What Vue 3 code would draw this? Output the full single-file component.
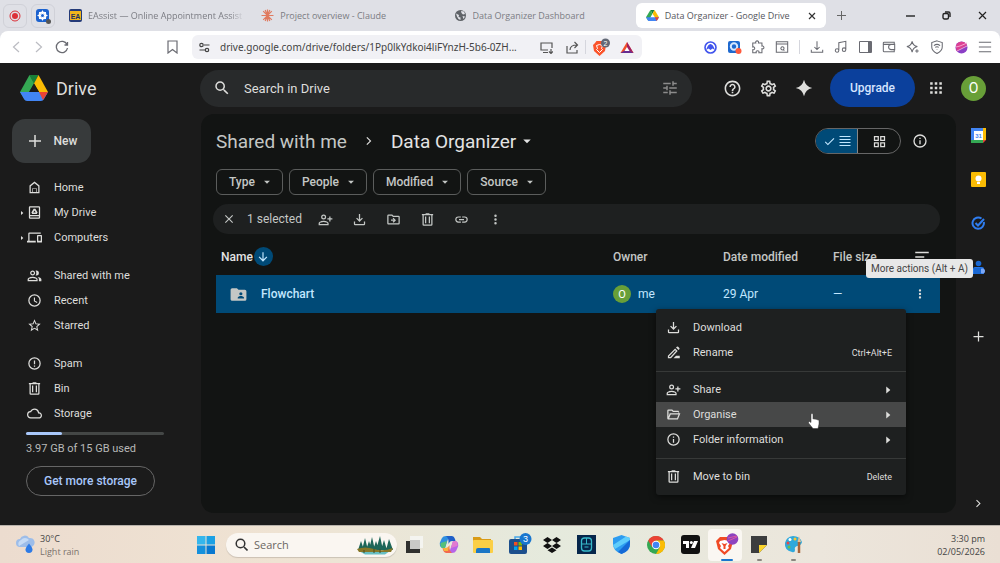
<script setup>
import { h, ref } from 'vue'

const paths = {
  search: 'M15.5 14h-.79l-.28-.27A6.47 6.47 0 0 0 16 9.5 6.5 6.5 0 1 0 9.5 16c1.61 0 3.09-.59 4.23-1.57l.27.28v.79l5 4.99L20.49 19l-4.99-5zm-6 0C7.01 14 5 11.99 5 9.5S7.01 5 9.5 5 14 7.01 14 9.5 11.99 14 9.5 14z',
  tune: 'M3 17v2h6v-2H3zM3 5v2h10V5H3zm10 16v-2h8v-2h-8v-2h-2v6h2zM7 9v2H3v2h4v2h2V9H7zm14 4v-2H11v2h10zm-6-4h2V7h4V5h-4V3h-2v6z',
  help: 'M11 18h2v-2h-2v2zm1-16C6.48 2 2 6.48 2 12s4.48 10 10 10 10-4.48 10-10S17.52 2 12 2zm0 18c-4.41 0-8-3.59-8-8s3.59-8 8-8 8 3.59 8 8-3.59 8-8 8zm0-14c-2.21 0-4 1.79-4 4h2c0-1.1.9-2 2-2s2 .9 2 2c0 2-3 1.75-3 5h2c0-2.25 3-2.5 3-5 0-2.21-1.79-4-4-4z',
  settings: 'M19.43 12.98c.04-.32.07-.64.07-.98 0-.34-.03-.66-.07-.98l2.11-1.65c.19-.15.24-.42.12-.64l-2-3.46a.5.5 0 0 0-.61-.22l-2.49 1c-.52-.4-1.08-.73-1.69-.98l-.38-2.65A.488.488 0 0 0 14 2h-4c-.25 0-.46.18-.49.42l-.38 2.65c-.61.25-1.17.59-1.69.98l-2.49-1a.566.566 0 0 0-.18-.03c-.17 0-.34.09-.43.25l-2 3.46c-.13.22-.07.49.12.64l2.11 1.65c-.04.32-.07.65-.07.98 0 .33.03.66.07.98l-2.11 1.65c-.19.15-.24.42-.12.64l2 3.46a.5.5 0 0 0 .61.22l2.49-1c.52.4 1.08.73 1.69.98l.38 2.65c.03.24.24.42.49.42h4c.25 0 .46-.18.49-.42l.38-2.65c.61-.25 1.17-.59 1.69-.98l2.49 1c.06.02.12.03.18.03.17 0 .34-.09.43-.25l2-3.46c.12-.22.07-.49-.12-.64l-2.11-1.65zm-1.98-1.71c.04.31.05.52.05.73 0 .21-.02.43-.05.73l-.14 1.13.89.7 1.08.84-.7 1.21-1.27-.51-1.04-.42-.9.68c-.43.32-.84.56-1.25.73l-1.06.43-.16 1.13-.2 1.35h-1.4l-.19-1.35-.16-1.13-1.06-.43c-.43-.18-.83-.41-1.23-.71l-.91-.7-1.06.43-1.27.51-.7-1.21 1.08-.84.89-.7-.14-1.13c-.03-.31-.05-.54-.05-.74s.02-.43.05-.73l.14-1.13-.89-.7-1.08-.84.7-1.21 1.27.51 1.04.42.9-.68c.43-.32.84-.56 1.25-.73l1.06-.43.16-1.13.2-1.35h1.39l.19 1.35.16 1.13 1.06.43c.43.18.83.41 1.23.71l.91.7 1.06-.43 1.27-.51.7 1.21-1.07.85-.89.7.14 1.13zM12 8c-2.21 0-4 1.79-4 4s1.79 4 4 4 4-1.79 4-4-1.79-4-4-4zm0 6c-1.1 0-2-.9-2-2s.9-2 2-2 2 .9 2 2-.9 2-2 2z',
  spark: 'M12 1Q14 10 23 12 14 14 12 23 10 14 1 12 10 10 12 1z',
  apps: 'M5 8h3V5H5v3zm5.500 11h3v-3h-3v3zM5 19h3v-3H5v3zm0-5.500h3v-3H5v3zm5.500 0h3v-3h-3v3zM16 5v3h3V5h-3zm-5.500 3h3V5h-3v3zm5.500 5.500h3v-3h-3v3zm0 5.500h3v-3h-3v3z',
  plus: 'M20 13h-7v7h-2v-7H4v-2h7V4h2v7h7z',
  home: 'M12 2.500 4 8.800V21h16V8.800zM18 19h-2.500v-6h-7v6H6V9.800l6-4.700 6 4.700zM9.500 14h5v5h-5z',
  drive: 'M5 2h14a2 2 0 0 1 2 2v16a2 2 0 0 1-2 2H5a2 2 0 0 1-2-2V4c0-1.100.9-2 2-2zm0 2v12h14V4zm0 14v2h14v-2zM10.600 6h2.800l3.600 6-1.400 2.500H8.400L7 12zM12 8.700 10 12h4z',
  computers: 'M4 6h18V4H4c-1.100 0-2 .9-2 2v11H0v3h14v-3H4V6zm19 2h-6c-.55 0-1 .45-1 1v10c0 .55.45 1 1 1h6c.55 0 1-.45 1-1V9c0-.55-.45-1-1-1zm-1 9h-4v-7h4v7z',
  people: 'M9 12c2.210 0 4-1.790 4-4s-1.790-4-4-4-4 1.790-4 4 1.790 4 4 4zm0-6a2 2 0 1 1 0 4 2 2 0 0 1 0-4zm0 8c-2.670 0-8 1.340-8 4v3h16v-3c0-2.660-5.330-4-8-4zm6 5H3v-1c0-.7 3-2 6-2s6 1.300 6 2zM15 12a4 4 0 1 0 0-8c-.5 0-.9.100-1.300.2 1.700 2 1.700 5.600 0 7.600.4.100.8.200 1.300.2zm2 2.400c1.500 1 2 2.200 2 3.600v3h4v-3c0-2-3-3.200-6-3.600z',
  clock: 'M12 2a10 10 0 1 0 0 20 10 10 0 0 0 0-20zm0 18a8 8 0 1 1 0-16 8 8 0 0 1 0 16zm.8-13H11v6l4.800 3 .9-1.500-3.900-2.300z',
  star: 'M22 9.240l-7.190-.62L12 2 9.190 8.630 2 9.240l5.460 4.730L5.820 21 12 17.270 18.180 21l-1.630-7.030L22 9.240zM12 15.400l-3.760 2.270 1-4.280-3.320-2.880 4.380-.38L12 6.100l1.710 4.040 4.380.38-3.320 2.880 1 4.280L12 15.400z',
  spam: 'M11 15h2v2h-2zm0-8h2v6h-2zm1-5a10 10 0 1 0 0 20 10 10 0 0 0 0-20zm0 18a8 8 0 1 1 0-16 8 8 0 0 1 0 16z',
  bin: 'M15 3V2H9v1H3v2h1v15a2 2 0 0 0 2 2h12a2 2 0 0 0 2-2V5h1V3zM6 20V5h12v15zM8 7h2v11H8zm6 0h2v11h-2z',
  cloud: 'M19.350 10.040A7.490 7.490 0 0 0 12 4C9.110 4 6.600 5.640 5.350 8.040A5.994 5.994 0 0 0 0 14c0 3.310 2.690 6 6 6h13c2.760 0 5-2.240 5-5 0-2.640-2.050-4.780-4.650-4.960zM19 18H6c-2.210 0-4-1.790-4-4 0-2.050 1.530-3.760 3.560-3.970l1.070-.11.5-.95A5.469 5.469 0 0 1 12 6c2.620 0 4.880 1.860 5.390 4.430l.3 1.500 1.530.11A2.980 2.980 0 0 1 22 15c0 1.650-1.350 3-3 3z',
  personAdd: 'M9 12a4 4 0 1 0 0-8 4 4 0 0 0 0 8zm0-6a2 2 0 1 1 0 4 2 2 0 0 1 0-4zm0 8c-2.670 0-8 1.340-8 4v3h16v-3c0-2.660-5.330-4-8-4zm6 5H3v-1c0-.7 3-2 6-2s6 1.300 6 2zm5-9V7h-2v3h-3v2h3v3h2v-3h3v-2z',
  download: 'M11 3h2v9l3-3 1.400 1.400L12 16l-5.400-5.600L8 9l3 3zM3 15h2v4h14v-4h2v4a2 2 0 0 1-2 2H5a2 2 0 0 1-2-2z',
  move: 'M20 6h-8l-2-2H4a2 2 0 0 0-2 2v12c0 1.100.9 2 2 2h16a2 2 0 0 0 2-2V8a2 2 0 0 0-2-2zm0 12H4V6h5.200l2 2H20zm-8-1 4-4-4-4-1.400 1.400 1.600 1.600H8v2h4.200l-1.600 1.600z',
  link: 'M3.900 12c0-1.710 1.390-3.100 3.100-3.100h4V7H7a5 5 0 0 0 0 10h4v-1.900H7c-1.710 0-3.100-1.390-3.100-3.100zM8 13h8v-2H8v2zm9-6h-4v1.900h4a3.100 3.100 0 0 1 0 6.200h-4V17h4a5 5 0 0 0 0-10z',
  dots: 'M12 8a2 2 0 1 0 0-4 2 2 0 0 0 0 4zm0 2a2 2 0 1 0 0 4 2 2 0 0 0 0-4zm0 6a2 2 0 1 0 0 4 2 2 0 0 0 0-4z',
  close: 'M19 6.400 17.600 5 12 10.600 6.400 5 5 6.400 10.600 12 5 17.600 6.400 19 12 13.400 17.600 19 19 17.600 13.400 12z',
  info: 'M11 7h2v2h-2zm0 4h2v6h-2zm1-9a10 10 0 1 0 0 20 10 10 0 0 0 0-20zm0 18a8 8 0 1 1 0-16 8 8 0 0 1 0 16z',
  caret: 'm7 10 5 5 5-5z',
  side: 'm9 6 7 6-7 6z',
  chevron: 'm9 5-1.400 1.400L13.200 12l-5.600 5.600L9 19l7-7z',
  check: 'M9 16.200 4.800 12l-1.400 1.400L9 19 21 7l-1.400-1.400z',
  list: 'M1 2h22v2.200H1zm0 6h22v2.200H1zm0 6h22v2.200H1zm0 6h22v2.200H1z',
  grid: 'M3 3h8v8H3zm2 2v4h4V5zm8-2h8v8h-8zm2 2v4h4V5zM3 13h8v8H3zm2 2v4h4v-4zm8-2h8v8h-8zm2 2v4h4v-4z',
  down: 'M11 4h2v12l5-5 1.400 1.400L12 20l-7.400-7.600L6 11l5 5z',
  rename: 'M3 21h5L18.600 9.400l-4-4L3 17zm2-3.200L14.600 8.200l1.200 1.200L6.900 19H5zM16 4l4 4 1.300-1.300a1.500 1.500 0 0 0 0-2L19.400 2.700a1.500 1.500 0 0 0-2 0zM12 21l4-4h6v4z',
  folderOpen: 'M20 6h-8l-2-2H4a2 2 0 0 0-2 2v12c0 1.100.9 2 2 2h15l4-10h-2V8zM4 6h5.200l2 2H20v2H6L4 15zm13.700 12H5l2.500-6h12.600z',
  sharedFolder: 'M20 6h-8l-2-2H4a2 2 0 0 0-2 2v12c0 1.100.9 2 2 2h16a2 2 0 0 0 2-2V8a2 2 0 0 0-2-2zm-5 3a2 2 0 1 1 0 4 2 2 0 0 1 0-4zm4 8h-8v-1c0-1.300 2.700-2 4-2s4 .7 4 2z',
  filter: 'M3 5h18v2H3zm0 6h12v2H3zm0 6h6v2H3z'
}

const Icon = (props) =>
  h('svg', { viewBox: '0 0 24 24', width: props.size || 16, height: props.size || 16, fill: 'currentColor', 'fill-rule': 'evenodd', 'aria-hidden': 'true' }, [
    h('path', { d: paths[props.name] })
  ])
Icon.props = ['name', 'size']

/* Outline icons of the browser toolbar, 16-unit grid */
const linePaths = {
  puzzle: 'M2 3.500h3.500c-1-3.300 4-3.300 3 0H12.500V7c3-1 3 4 0 3v4.500H9c1-3-4-3-3 0H2V11c3 1 3-4 0-3z',
  find: 'M1.500 2h13v12h-13zM1.500 4.500h13M9.500 11a1.800 1.800 0 1 0-2.500-2.500A1.800 1.800 0 0 0 9.500 11l1.200 1.200',
  save: 'M8 1.500v9M5 8l3 3 3-3M1.500 11v3h13v-3',
  music: 'M5.500 12V3l8-1.500V11M5.500 12a2 2 0 1 1-4 0 2 2 0 0 1 4 0zM13.500 11a2 2 0 1 1-4 0 2 2 0 0 1 4 0z',
  wallet: 'M14 5V2.500H2.500a1 1 0 0 0-1 1v9a1 1 0 0 0 1 1H14V11M1.500 5h13v6h-4a3 3 0 0 1 0-6',
  stars: 'M7 1.500Q8 6.500 13 7.500 8 8.500 7 14 6 8.500 1 7.500 6 6.500 7 1.500zM12.500 10.500v4M10.500 12.500h4',
  vpn: 'M8 1l6 2v5c0 4-3 6-6 7.500C5 14 2 12 2 8V3zM4.500 6.500q3.500-3 7 0M6 8.500q2-1.500 4 0M8 10.500v.5',
  menu: 'M1 2.500h14M1 8h14M1 13.500h14'
}
const LineIcon = (props) =>
  h('svg', { viewBox: '0 0 16 16', width: 14, height: 14, fill: 'none', stroke: 'currentColor', 'stroke-width': 1.2, 'aria-hidden': 'true' }, [
    h('path', { d: linePaths[props.name] })
  ])
LineIcon.props = ['name']

const address = ref('drive.google.com/drive/folders/1Pp0lkYdkoi4liFYnzH-5b6-0ZH...')
const driveQuery = ref('')
const taskQuery = ref('')
const used = 26

const tabs = [
  { title: 'EAssist — Online Appointment Assist', icon: 'ea' },
  { title: 'Project overview - Claude', icon: 'claude' },
  { title: 'Data Organizer Dashboard', icon: 'globe' },
  { title: 'Data Organizer - Google Drive', icon: 'drive', active: true }
]
const nav = [
  [
    { label: 'Home', icon: 'home' },
    { label: 'My Drive', icon: 'drive', more: true },
    { label: 'Computers', icon: 'computers', more: true }
  ],
  [
    { label: 'Shared with me', icon: 'people' },
    { label: 'Recent', icon: 'clock' },
    { label: 'Starred', icon: 'star' }
  ],
  [
    { label: 'Spam', icon: 'spam' },
    { label: 'Bin', icon: 'bin' },
    { label: 'Storage', icon: 'cloud' }
  ]
]
const chips = ['Type', 'People', 'Modified', 'Source']
const actions = [
  ['personAdd', 'Share'],
  ['download', 'Download'],
  ['move', 'Move'],
  ['bin', 'Move to bin'],
  ['link', 'Copy link'],
  ['dots', 'More']
]
const menu = [
  [
    { label: 'Download', icon: 'download' },
    { label: 'Rename', icon: 'rename', key: 'Ctrl+Alt+E' }
  ],
  [
    { label: 'Share', icon: 'personAdd', more: true },
    { label: 'Organise', icon: 'folderOpen', more: true, hover: true },
    { label: 'Folder information', icon: 'info', more: true }
  ],
  [{ label: 'Move to bin', icon: 'bin', key: 'Delete' }]
]
</script>

<template>
  <div class="screen">
    <header class="tabbar">
      <button class="pin" aria-label="Recorder">
        <svg width="12" height="12" viewBox="0 0 12 12"><circle cx="6" cy="6" r="5" fill="none" stroke="#dc3038" /><circle cx="6" cy="6" r="3" fill="#dc3038" /></svg>
      </button>
      <button class="pin" aria-label="Pinned settings">
        <svg width="16" height="16" viewBox="0 0 16 16"><rect x="1" y="1" width="13" height="13" rx="3" fill="#1c62cf" /><circle cx="7.500" cy="7.500" r="3" fill="none" stroke="#fff" stroke-width="2" /><path d="M7.500 2.500v10M2.500 7.500h10M4 4l7 7M11 4l-7 7" stroke="#fff" /><circle cx="7.500" cy="7.500" r="1.500" fill="#1c62cf" /><circle cx="13.500" cy="13.500" r="2.500" fill="#555" /></svg>
      </button>
      <div class="tabs">
        <button v-for="t in tabs" :key="t.title" class="tab" :class="{ active: t.active }">
          <svg v-if="t.icon === 'ea'" width="13" height="13" viewBox="0 0 13 13"><rect width="13" height="13" rx="2" fill="#243a78" /><rect x="1" y="2" width="11" height="9" fill="#f0b51c" /><text x="6.500" y="9.500" text-anchor="middle" class="ea">EA</text></svg>
          <svg v-else-if="t.icon === 'claude'" width="13" height="13" viewBox="0 0 13 13"><path d="M6.500.5v12M.5 6.500h12M2.200 2.200l8.600 8.600M10.800 2.200l-8.600 8.600M4.200 1l4.600 11M8.800 1 4.200 12" stroke="#e07a5f" stroke-width="1.200" /></svg>
          <svg v-else-if="t.icon === 'globe'" width="13" height="13" viewBox="0 0 13 13"><circle cx="6.500" cy="6.500" r="5.500" fill="#5f6368" /><path d="M2 4.500 5 6 4.500 8l2 .5v2.500L4.500 10 3 7.500zM7 2l3 .5 1 2.500-2 .5L7.500 4zM8.500 7l2.500.5-1.500 2.500z" fill="#e2e3e9" /></svg>
          <svg v-else width="13" height="13" viewBox="0 0 28 26"><path d="M9.500 1h9L14 9z" fill="#188038" /><path d="M9.500 1 14 9 5 25 0 17z" fill="#34a853" /><path d="M18.500 1 28 17h-9L14 9z" fill="#fbbc04" /><path d="M0 17h28l-5 8H5z" fill="#4285f4" /><path d="M19 17h9l-5 8z" fill="#ea4335" /></svg>
          <span class="tab-title">{{ t.title }}</span>
          <svg v-if="t.active" class="tab-x" width="8" height="8" viewBox="0 0 8 8"><path d="M1 1l6 6M7 1 1 7" stroke="#333" stroke-width="1.200" /></svg>
        </button>
      </div>
      <button class="new-tab" aria-label="New tab"><svg width="9" height="9" viewBox="0 0 9 9"><path d="M4.500 0v9M0 4.500h9" stroke="#666" /></svg></button>
      <div class="window-buttons">
        <button aria-label="Minimise"><svg width="9" height="9" viewBox="0 0 9 9"><path d="M0 5h9" stroke="#222" stroke-width="1.400" /></svg></button>
        <button aria-label="Restore"><svg width="9" height="9" viewBox="0 0 9 9"><rect x="1" y="2.500" width="5.500" height="5.500" rx="1.500" fill="none" stroke="#222" stroke-width="1.400" /><path d="M3 1h3.500Q8 1 8 2.500V6" fill="none" stroke="#222" stroke-width="1.400" /></svg></button>
        <button aria-label="Close window"><svg width="9" height="9" viewBox="0 0 9 9"><path d="M1 1l7 7M8 1 1 8" stroke="#222" stroke-width="1.200" /></svg></button>
      </div>
    </header>

    <div class="toolbar">
      <button class="faint" aria-label="Back"><svg width="8" height="12" viewBox="0 0 8 12"><path d="M7 1 1.500 6 7 11" fill="none" stroke="currentColor" stroke-width="1.200" /></svg></button>
      <button class="faint" aria-label="Forward"><svg width="8" height="12" viewBox="0 0 8 12"><path d="m1 1 5.500 5L1 11" fill="none" stroke="currentColor" stroke-width="1.200" /></svg></button>
      <button aria-label="Reload"><svg width="14" height="14" viewBox="0 0 14 14"><path d="M12 4.500A5.600 5.600 0 1 0 12.500 8M12.500 2v3H9.500" fill="none" stroke="currentColor" stroke-width="1.300" /></svg></button>
      <button class="bookmark" aria-label="Bookmark"><svg width="11" height="14" viewBox="0 0 11 14"><path d="M1 1h9v12L5.500 9.500 1 13z" fill="none" stroke="currentColor" stroke-width="1.200" /></svg></button>
      <div class="address">
        <button aria-label="Site settings"><svg width="11" height="11" viewBox="0 0 11 11" fill="none" stroke="#444" stroke-width="1.200"><circle cx="2.500" cy="3" r="1.700" /><path d="M5 3h5.500M.5 8h5.500" /><circle cx="8" cy="8" r="1.700" /></svg></button>
        <input v-model="address" aria-label="Address">
        <button aria-label="Install app"><svg width="13" height="13" viewBox="0 0 13 13" fill="none" stroke="#555" stroke-width="1.200"><path d="M12 7V2H1v7h7M3 11.500h5M11 8v4.500M9 10.500l2 2 2-2" /></svg></button>
        <button aria-label="Share page"><svg width="13" height="13" viewBox="0 0 13 13" fill="none" stroke="#555" stroke-width="1.200"><path d="M1 5v7h10V9M4 9q0-5 7-5M8.500 1l3 3-3 3" /></svg></button>
        <i class="bar"></i>
        <button class="shields" aria-label="Shields">
          <svg width="19" height="19" viewBox="0 0 19 19"><path d="m4 5 1.500-2h6L13 5l2 2-1 6-5.500 5L3 13 2 7z" fill="#fb542b" /><path d="m5.500 7.500 3-1 3 1-1 3 1 1-3 3-3-3 1-1z" fill="none" stroke="#fff" /><circle cx="14.500" cy="5" r="4.500" fill="#626875" /><text x="14.500" y="7.500" class="count">2</text></svg>
        </button>
        <button aria-label="Rewards"><svg width="14" height="13" viewBox="0 0 14 13"><path d="M7 1 .5 12h13z" fill="#f0502a" /><path d="M7 1v7l6.500 4z" fill="#9e1f63" /><path d="M.5 12h13L7 8z" fill="#662d91" /><path d="m7 6-2.500 4h5z" fill="#fff" /></svg></button>
      </div>
      <div class="extensions">
        <button aria-label="VPN extension"><svg width="13" height="13" viewBox="0 0 13 13"><circle cx="6.500" cy="6.500" r="5.500" fill="#fff" stroke="#4054ed" stroke-width="1.600" /><path d="M2 9q2-6 4.500-6T11 9L8.500 7.500 6.500 9l-2-1.500z" fill="#4054ed" /></svg></button>
        <button aria-label="Recorder extension"><svg width="15" height="15" viewBox="0 0 15 15"><rect x="1" y="1" width="12" height="12" rx="2" fill="#1e69cf" /><circle cx="7" cy="6.500" r="3.200" fill="none" stroke="#d6e8ff" stroke-width="2" /><circle cx="11.500" cy="11" r="3" fill="#ff5a3c" /></svg></button>
        <button aria-label="Extensions"><LineIcon name="puzzle" /></button>
        <button aria-label="Find"><LineIcon name="find" /></button>
      </div>
      <i class="bar"></i>
      <div class="extensions">
        <button aria-label="Downloads"><LineIcon name="save" /></button>
        <button aria-label="Playlist"><LineIcon name="music" /></button>
        <button aria-label="Sidebar"><svg width="13" height="12" viewBox="0 0 13 12"><path d="M.5.5h12v11H.5z" fill="none" stroke="currentColor" /><path d="M9 1h3v10H9z" fill="currentColor" /></svg></button>
        <button aria-label="Wallet"><LineIcon name="wallet" /></button>
        <button aria-label="Assistant"><LineIcon name="stars" /></button>
        <button aria-label="VPN"><LineIcon name="vpn" /></button>
        <button aria-label="Profile"><svg width="13" height="13" viewBox="0 0 13 13"><circle cx="6.500" cy="6.500" r="6" fill="#8b3fc6" /><path d="M1 4.500A6 6 0 0 1 12 4L1.500 10z" fill="#dd3f92" /><path d="m1 6 4-1 7-3M2 10l10-5" stroke="#f4a2cf" fill="none" /></svg></button>
        <button aria-label="Browser menu"><LineIcon name="menu" /></button>
      </div>
    </div>

    <div class="drive">
      <header class="drive-head">
        <a class="brand" href="#">
          <svg width="28" height="26" viewBox="0 0 28 26"><path d="M9.500 0h9L14 9z" fill="#188038" /><path d="M9.500 0 14 8.500 5 25 0 17z" fill="#34a853" /><path d="M18.500 0 28 17h-9L14 8.500z" fill="#fbbc04" /><path d="M0 17h28l-4 7q-1 2-3 2H7q-2 0-3-2z" fill="#4285f4" /><path d="M19 17h9l-5 8z" fill="#ea4335" /><path d="M14 8.500 19 17H9z" fill="#1b1b1b" /></svg>
          <span>Drive</span>
        </a>
        <label class="search">
          <Icon name="search" size="18" />
          <input v-model="driveQuery" placeholder="Search in Drive" aria-label="Search in Drive">
          <button class="plain dim" aria-label="Search options"><Icon name="tune" size="18" /></button>
        </label>
        <div class="head-actions">
          <button class="plain" aria-label="Support"><Icon name="help" size="19" /></button>
          <button class="plain" aria-label="Settings"><Icon name="settings" size="19" /></button>
          <button class="plain" aria-label="Gemini"><Icon name="spark" size="18" /></button>
          <button class="upgrade">Upgrade</button>
          <button class="plain apps" aria-label="Google apps"><Icon name="apps" size="20" /></button>
          <button class="avatar big" aria-label="Account">O</button>
        </div>
      </header>

      <div class="drive-body">
        <aside class="side">
          <button class="new"><Icon name="plus" size="18" />New</button>
          <nav>
            <ul v-for="(group, i) in nav" :key="i">
              <li v-for="n in group" :key="n.label">
                <a href="#">
                  <span class="more"><Icon v-if="n.more" name="side" size="8" /></span>
                  <Icon :name="n.icon" size="15" />
                  {{ n.label }}
                </a>
              </li>
            </ul>
          </nav>
          <div class="storage">
            <div class="track"><div class="fill" :style="{ width: used + '%' }"></div></div>
            <p>3.97 GB of 15 GB used</p>
            <button>Get more storage</button>
          </div>
        </aside>

        <main class="panel">
          <div class="title-row">
            <a href="#" class="crumb">Shared with me</a>
            <Icon class="crumb-sep" name="chevron" size="14" />
            <button class="crumb here">Data Organizer<Icon name="caret" size="18" /></button>
            <div class="views">
              <button class="on" aria-label="List layout"><Icon name="check" size="13" /><Icon name="list" size="12" /></button>
              <button aria-label="Grid layout"><Icon name="grid" size="15" /></button>
            </div>
            <button class="plain" aria-label="View details"><Icon name="info" size="16" /></button>
          </div>
          <div class="chips">
            <button v-for="c in chips" :key="c">{{ c }}<Icon name="caret" size="14" /></button>
          </div>
          <div class="selection">
            <button class="plain" aria-label="Clear selection"><Icon name="close" size="14" /></button>
            <span>1 selected</span>
            <button v-for="a in actions" :key="a[0]" class="plain act" :aria-label="a[1]"><Icon :name="a[0]" size="15" /></button>
          </div>
          <table>
            <colgroup><col><col class="c-mid"><col class="c-mid"><col class="c-size"><col class="c-end"></colgroup>
            <thead>
              <tr>
                <th><span class="name-head">Name <span class="sort"><Icon name="down" size="14" /></span></span></th>
                <th>Owner</th><th>Date modified</th><th>File size</th>
                <th><button class="plain" aria-label="Sort options"><Icon name="filter" size="18" /></button></th>
              </tr>
            </thead>
            <tbody>
              <tr>
                <td><span class="file"><Icon name="sharedFolder" size="19" />Flowchart</span></td>
                <td><span class="owner"><span class="avatar">O</span>me</span></td>
                <td>29 Apr</td><td>—</td>
                <td>
                  <div class="row-end">
                    <button class="plain" aria-label="More actions (Alt + A)"><Icon name="dots" size="14" /></button>
                    <div class="tip" role="tooltip">More actions (Alt + A)</div>
                    <div class="menu" role="menu">
                      <div v-for="(group, i) in menu" :key="i" class="menu-group">
                        <button v-for="m in group" :key="m.label" role="menuitem" :class="{ hover: m.hover }">
                          <Icon :name="m.icon" size="15" /><span class="label">{{ m.label }}</span>
                          <kbd v-if="m.key">{{ m.key }}</kbd>
                          <Icon v-if="m.more" name="side" size="14" />
                          <svg v-if="m.hover" class="pointer" width="12" height="16" viewBox="0 0 12 16"><path d="M3 1.500q0-1 1-1t1 1V6q1-.8 2 .3 1.200-.6 2 .5 1.500-.5 2 1V11L10 15.500H5L.5 10q-.5-1.500 1-1.500L3 9.500z" fill="#fff" stroke="#333" stroke-width=".5" /></svg>
                        </button>
                      </div>
                    </div>
                  </div>
                </td>
              </tr>
            </tbody>
          </table>
        </main>

        <aside class="rail">
          <button aria-label="Calendar"><svg width="15" height="15" viewBox="0 0 15 15"><path d="M0 0h12v3H3v9H0z" fill="#4285f4" /><path d="M12 0h3v12h-3z" fill="#fbbc04" /><path d="M0 12h12v3H0z" fill="#34a853" /><path d="M12 12h3l-3 3z" fill="#ea4335" /><path d="M3 3h9v9H3z" fill="#fff" /><text x="7.500" y="10" class="cal">31</text></svg></button>
          <button aria-label="Keep"><svg width="15" height="15" viewBox="0 0 15 15"><rect width="15" height="15" rx="1" fill="#fbbc04" /><circle cx="7.500" cy="6.500" r="3" fill="#fff" /><path d="M6 10h3v2H6z" fill="#fff" /></svg></button>
          <button aria-label="Tasks"><svg width="15" height="15" viewBox="0 0 15 15"><path d="M10.500 2.500A5.700 5.700 0 1 0 12.800 6" fill="none" stroke="#2f7df0" stroke-width="2" /><path d="m4.500 7 2.500 2.500L13 3" fill="none" stroke="#2f7df0" stroke-width="2" /></svg></button>
          <button aria-label="Contacts"><svg width="15" height="15" viewBox="0 0 15 15"><circle cx="7.500" cy="3.500" r="2.800" fill="#1967d2" /><path d="M2 9q0-2 2-2h7q2 0 2 2v5H2z" fill="#2474e8" /><circle cx="11.500" cy="11" r="2.500" fill="#7ba7f7" /><path d="M3 8h7v6H3z" fill="#1967d2" /></svg></button>
          <button class="add" aria-label="Get add-ons"><Icon name="plus" size="15" /></button>
          <button class="hide" aria-label="Hide side panel"><Icon name="chevron" size="13" /></button>
        </aside>
      </div>
    </div>

    <footer class="taskbar">
      <button class="weather">
        <svg width="20" height="19" viewBox="0 0 20 19"><path d="M5 12a4 4 0 0 1 0-8 5 5 0 0 1 9-1 4 4 0 0 1 2 9z" fill="#9dbde9" /><path d="M4 11a4 4 0 0 1 2-6 5 5 0 0 1 8 0z" fill="#c6dbf5" /><path d="M14 8.500q3.500 4 3.500 6a3.500 3.500 0 0 1-7 0q0-2 3.500-6z" fill="#2e7be6" /></svg>
        <span><b>30°C</b><br>Light rain</span>
      </button>
      <div class="launch">
        <button aria-label="Start"><svg width="18" height="18" viewBox="0 0 18 18"><path d="M0 0h8.500v8.500H0z" fill="#35b6ec" /><path d="M9.500 0H18v8.500H9.500z" fill="#1ba0e4" /><path d="M0 9.500h8.500V18H0z" fill="#1590dc" /><path d="M9.500 9.500H18V18H9.500z" fill="#0878d0" /></svg></button>
        <label class="task-search">
          <svg width="13" height="13" viewBox="0 0 13 13"><circle cx="5.500" cy="5.500" r="4.300" fill="none" stroke="#333" stroke-width="1.500" /><path d="m9 9 3.500 3.500" stroke="#333" stroke-width="1.600" /></svg>
          <input v-model="taskQuery" placeholder="Search" aria-label="Search Windows">
          <svg width="38" height="20" viewBox="0 0 38 20"><path d="M3 16h31l-5 3.500H9z" fill="#67bfc4" /><path d="m2 15 3-9 3 9zM6 15l3-12 3 12zM10 15l3-9 3 9zM13 15l3-13 3 13zM17 15l3-9 3 9zM20 15l4-14 3 14zM25 15l3-10 3 10zM30 15l3-11 4 11z" fill="#1d6658" /><path d="M1 14q8-3 17 0t19-1l-2 4H3z" fill="#877727" /><path d="M8 15v3M18 14v4M24 14v4" stroke="#454c20" /></svg>
        </label>
        <div class="apps-row">
          <button aria-label="Task view"><svg width="18" height="18" viewBox="0 0 18 18"><path d="M5 0h13v12H5z" fill="#f4f4f0" /><path d="M1 5h9v8h5v4H1z" fill="#30302e" /><path d="M5 4h10v9H5z" fill="#c9c9c6" /></svg></button>
          <button aria-label="Copilot"><svg width="20" height="19" viewBox="0 0 20 19"><path d="M1 11q-1-3 1-6l1-2q1-2 4-2h3L6 13H4q-2 0-3-2z" fill="#2f8fe0" /><path d="M1.500 8 8 6l-2 7H4q-3 0-2.500-5z" fill="#55c07a" /><path d="M7 1h6q2 0 3 3l.5 2H13q-2 0-3 2l-.5 1Q10 3 7 1z" fill="#1f5fc8" /><path d="M19 8q1 3-1 6l-1 2q-1 2-4 2h-3l4-12h2q2 0 3 2z" fill="#b765e8" /><path d="m18.500 11-6.500 2 2-7h2q3 0 2.500 5z" fill="#e27bd0" /><path d="M13 18H7q-2 0-3-3l-.5-2H7q2 0 3-2l.5-1q-.500 6 2.500 8z" fill="#f2694e" /><path d="M4 13h3q2 0 3-2l-1 5H5z" fill="#f8b43c" /></svg></button>
          <button aria-label="File Explorer"><svg width="20" height="18" viewBox="0 0 20 18"><path d="M0 1h7l2 2h9v5H0z" fill="#d99b16" /><rect y="4" width="20" height="13" rx="1" fill="#fbcf45" /><path d="M5 12h11q1 0 1 1v4H3v-3q0-2 2-2z" fill="#1b76c5" /></svg></button>
          <button class="notified" aria-label="Store"><svg width="24" height="24" viewBox="0 0 24 24"><path d="M7 7V4h7v3" fill="none" stroke="#4aa8e8" stroke-width="1.500" /><rect x="1" y="6" width="18" height="15" rx="2" fill="#1d4f8c" /><path d="M6 9h3.500v3.500H6z" fill="#f25022" /><path d="M10.500 9H14v3.500h-3.500z" fill="#7fba00" /><path d="M6 13.500h3.500V17H6z" fill="#00a4ef" /><path d="M10.500 13.500H14V17h-3.500z" fill="#ffb900" /><circle cx="17.500" cy="6" r="6" fill="#1876cf" /><text x="17.500" y="9" class="badge">3</text></svg></button>
          <button aria-label="Dropbox"><svg width="18" height="16" viewBox="0 0 18 16"><path d="m4.500 0 4.500 3-4.500 3L0 3zM13.500 0 18 3l-4.500 3L9 3zM4.500 6 9 9l-4.500 3L0 9zM13.500 6 18 9l-4.500 3L9 9zM9 10.500l4.500 2.700L9 16l-4.500-2.800z" fill="#111" /></svg></button>
          <button aria-label="Mouse utility"><svg width="19" height="19" viewBox="0 0 19 19"><path d="M0 0h19v19H0z" fill="#06264b" /><rect x="4.500" y="3" width="10" height="13" rx="3" fill="none" stroke="#37b9ca" stroke-width="1.300" /><path d="M5 9h9M9.500 3v6M7.500 12h4" stroke="#37b9ca" /></svg></button>
          <button aria-label="Defender"><svg width="17" height="19" viewBox="0 0 17 19"><path d="M8.500 0 17 3v6q0 7-8.500 10Q0 16 0 9V3z" fill="#2d9cf0" /><path d="M0 10 13 1.500 17 3v2L2 14z" fill="#60cdfb" /><path d="M17 5v4q0 7-8.500 10L5 17z" fill="#1569d6" /></svg></button>
          <button aria-label="Chrome"><svg width="18" height="18" viewBox="0 0 18 18"><circle cx="9" cy="9" r="9" fill="#34a853" /><path d="M1.200 4.500A9 9 0 0 1 16.800 4.500H9L5 11z" fill="#ea4335" /><path d="M16.800 4.500A9 9 0 0 1 9 18l4-7-4-6.500z" fill="#fbbc04" /><circle cx="9" cy="9" r="4.200" fill="#fff" /><circle cx="9" cy="9" r="3.300" fill="#4285f4" /></svg></button>
          <button aria-label="TradingView"><svg width="19" height="19" viewBox="0 0 19 19"><rect width="19" height="19" rx="3" fill="#111" /><path d="M2 6h6v7H5V9H2zM13 6h4l-3 7h-4z" fill="#fff" /><circle cx="10.300" cy="7.500" r="1.500" fill="#fff" /></svg></button>
          <button class="current notified" aria-label="Brave"><svg width="24" height="24" viewBox="0 0 24 24"><path d="m3 6 2-2h9l2 2 2 2-2 8-6.500 6L3 16 1 8z" fill="#f04a25" /><path d="m5 8 4.500-1L14 8l1 2-2 3 1 2-4.500 4L5 15l1-2-2-3z" fill="#fff" /><path d="m6.500 10 3 1 3-1-2 3v3h-2v-3z" fill="#f04a25" /><circle cx="17.500" cy="6" r="5.800" fill="#8d43bf" /><path d="m13 5 9-2M13 8l9-4" stroke="#dd57a3" /></svg></button>
          <button class="open" aria-label="Sticky Notes"><svg width="16" height="17" viewBox="0 0 16 17"><path d="M0 0h16v9l-8 8H0z" fill="#3c3d3e" /><path d="M8 9h8l-8 8z" fill="#fbd52c" /></svg></button>
          <button class="open" aria-label="Paint"><svg width="19" height="19" viewBox="0 0 19 19"><path d="M9 1q7 0 9 6-1 4-5 4-3 1-2 4 0 3-3 2-8-2-7-9Q2 2 9 1z" fill="#2fa9dc" /><circle cx="4" cy="8" r="1.500" fill="#e34a4a" /><circle cx="6" cy="4.500" r="1.500" fill="#fff" /><circle cx="11" cy="4" r="1.500" fill="#fbc62d" /><circle cx="5" cy="12" r="1.500" fill="#6cc04a" /><path d="M15 6v12" stroke="#a8643a" stroke-width="2.500" /><path d="M13.500 7 15 1l2 6z" fill="#e5c192" /></svg></button>
        </div>
      </div>
      <time class="clock">3:30 pm<br>02/05/2026</time>
    </footer>
  </div>
</template>

<style>
html, body { background: #1b1b1b; }
</style>

<style scoped>
* { box-sizing: border-box; }
.screen { min-height: 100vh; display: flex; flex-direction: column; font-family: "Open Sans", "Noto Sans", sans-serif; font-size: 9px; background: #dfe0e6; }
button, input { font: inherit; color: inherit; border: 0; background: none; padding: 0; margin: 0; outline: 0; min-width: 0; }
button { display: flex; align-items: center; justify-content: center; cursor: pointer; }
a { color: inherit; text-decoration: none; }
svg { flex: none; display: block; }

.tabbar { display: flex; align-items: center; height: 31px; padding-left: 3px; gap: 4px; }
.pin { flex: none; width: 24px; height: 24px; border: 1px solid #d0d1d8; border-radius: 6px; }
.tabs { flex: 0 1 767px; display: grid; grid-template-columns: repeat(4, minmax(0, 1fr)); gap: 2px; }
.tab { height: 25px; padding: 0 0 0 10px; gap: 6px; justify-content: flex-start; border-radius: 6px; color: #7b7c83; }
.tab.active { padding-right: 10px; background: #fff; color: #55565c; }
.tab-title { flex: 1; overflow: hidden; white-space: nowrap; text-align: left; }
.tab:first-child .tab-title { mask-image: linear-gradient(90deg, #000 88%, transparent 97%); }
.ea { font: bold 7px "Liberation Sans", sans-serif; fill: #1c2f60; }
.new-tab { width: 22px; height: 24px; }
.window-buttons { margin-left: auto; display: flex; }
.window-buttons button { width: 36px; height: 31px; }

.toolbar { display: flex; align-items: center; height: 32px; padding: 0 3px 0 4px; background: #fff; border-radius: 8px 8px 0 0; color: #6a6b72; }
.toolbar > button { flex: none; width: 23px; height: 24px; }
.toolbar .faint { color: #bbbcc2; }
.toolbar .bookmark { margin: 0 8px 0 88px; }
.address { flex: 0 1 450px; display: flex; align-items: center; height: 24px; padding: 0 2px 0 6px; border-radius: 6px; background: #f1f1f5; }
.address input { flex: 1; margin: 0 4px 0 10px; font-family: "Noto Sans", sans-serif; font-size: 10px; color: #444; text-overflow: ellipsis; }
.address button { flex: none; width: 26px; height: 24px; }
.address button:first-child { width: 12px; }
.address .shields { width: 28px; }
.bar { flex: none; width: 1px; height: 14px; background: #d5d6dd; }
.extensions { display: flex; }
.address + .extensions { margin-left: auto; }
.extensions button { width: 24px; height: 24px; }
.toolbar > .bar { margin: 0 5px; }

.drive { flex: 1; display: flex; flex-direction: column; background: #1b1b1b; color: #dededc; font-family: Roboto, "Liberation Sans", sans-serif; font-size: 12px; }
.drive-head { display: flex; align-items: center; height: 50px; margin-bottom: 1px; padding: 0 14px 0 20px; }
.brand { display: flex; align-items: center; gap: 8px; width: 180px; font-size: 18px; }
.search { flex: 0 1 492px; display: flex; align-items: center; height: 37px; padding: 0 13px; gap: 13px; border-radius: 19px; background: #282a2b; }
.search input { flex: 1; font-size: 13px; }
input::placeholder { color: inherit; opacity: 1; }
.plain { flex: none; color: #dededc; }
.dim { color: #8c8c8c; }
.head-actions { margin-left: auto; display: flex; align-items: center; gap: 17px; }
.upgrade { width: 85px; height: 38px; border-radius: 19px; background: #0b409c; font-weight: 500; color: #d5e4ff; }
.apps { margin: 0 -2px 0 -6px; }
.avatar { display: flex; align-items: center; justify-content: center; width: 18px; height: 18px; border-radius: 50%; background: #689f38; color: #fff; font-size: 11px; }
.avatar.big { width: 25px; height: 25px; font-size: 14px; }

.drive-body { flex: 1; display: grid; grid-template-columns: 201px minmax(0, 1fr) 44px; }
.side { padding-top: 5px; }
.new { width: 79px; height: 44px; margin: 0 0 12px 12px; gap: 10px; border-radius: 13px; background: #373a3b; font-weight: 500; }
ul { list-style: none; margin: 0 0 13px; padding: 0; }
li a { display: flex; align-items: center; height: 25px; padding-left: 18px; gap: 12px; font-size: 11px; }
li .more { width: 8px; margin-right: -11px; }
.storage { margin: -7px 37px 0 26px; color: #b8b9b8; }
.track { height: 3px; border-radius: 2px; background: #444746; }
.fill { height: 3px; border-radius: 2px; background: #a8c7fa; }
.storage p { margin: 5px 0 8px; line-height: 18px; font-size: 11px; white-space: nowrap; }
.storage button { width: 129px; height: 30px; border: 1px solid #666; border-radius: 15px; color: #a8c7fa; font-weight: 500; white-space: nowrap; }

.panel { margin-bottom: 12px; padding: 9px 16px 0 15px; border-radius: 13px; background: #121413; }
.title-row { display: flex; align-items: center; height: 36px; margin-bottom: 10px; }
.crumb { font-size: 19px; color: #c4c7c5; white-space: nowrap; }
.crumb-sep { margin: 0 15px; }
.crumb.here { color: #e3e3e3; gap: 2px; }
.views { margin: 0 11px 0 auto; display: flex; border: 1px solid #666; border-radius: 13px; overflow: hidden; }
.views button { width: 42px; height: 24px; gap: 3px; }
.views .on { background: #004a77; color: #c2e7ff; border-right: 1px solid #888; }
.title-row .plain { margin-right: 12px; }
.chips { display: flex; gap: 6px; }
.chips button { height: 26px; padding: 0 8px 0 12px; gap: 5px; border: 1px solid #5b5d5c; border-radius: 6px; color: #c4c7c5; font-weight: 500; }
.selection { display: flex; align-items: center; height: 30px; margin: 9px 0 4px -3px; padding-left: 9px; border-radius: 15px; background: #1e2020; color: #c4c7c5; }
.selection span { margin: 0 7px 0 11px; white-space: nowrap; }
.selection .plain { color: inherit; }
.act { width: 34px; height: 30px; }

table { width: 100%; table-layout: fixed; border-collapse: collapse; }
.c-mid { width: 110px; }
.c-size { width: 65px; }
.c-end { width: 42px; }
th, td { padding: 0; text-align: left; font-weight: 500; color: #c4c7c5; white-space: nowrap; }
th { height: 37px; }
td { height: 38px; background: #004a77; color: #c2e7ff; font-weight: 400; }
.name-head, .owner, .file { display: flex; align-items: center; }
.name-head { padding-left: 5px; gap: 1px; color: #e3e3e3; }
.sort { display: flex; align-items: center; justify-content: center; width: 19px; height: 19px; border-radius: 50%; background: #004a77; color: #c2e7ff; }
.file { padding-left: 13px; gap: 13px; font-weight: 500; }
.file svg { color: #c4c7c5; }
.owner { gap: 7px; }
.row-end { position: relative; height: 38px; display: flex; align-items: center; padding-left: 15px; }
th .plain { margin-left: 15px; }
.tip { position: absolute; z-index: 3; top: -16px; right: -33px; height: 19px; line-height: 19px; padding: 0 5px; border-radius: 3px; background: #e8e8e8; color: #444; font-size: 10px; white-space: nowrap; }
.menu { position: absolute; z-index: 2; top: 34px; right: 34px; width: 250px; padding: 6px 0; border-radius: 3px; background: #1e2020; color: #dededc; box-shadow: 0 2px 6px rgba(0, 0, 0, .5); font-size: 11px; }
.menu-group + .menu-group { padding-top: 5px; margin-top: 6px; border-top: 1px solid #373938; }
.menu button { position: relative; width: 100%; height: 25px; padding: 0 11px 0 10px; gap: 12px; }
.menu .hover { background: #474848; }
.label { flex: 1; text-align: left; }
kbd { font-family: inherit; font-size: 9px; margin-right: 3px; }
.pointer { position: absolute; left: 152px; top: 11px; }

.rail { display: flex; flex-direction: column; align-items: center; padding: 9px 0 12px; gap: 20px; }
.rail button { width: 24px; height: 24px; }
.rail .add { margin-top: 25px; }
.rail .hide { margin-top: auto; height: 20px; }
.cal { font: bold 6px "Liberation Sans", sans-serif; fill: #4285f4; text-anchor: middle; }
.count, .badge { font: 7px "Liberation Sans", sans-serif; fill: #fff; text-anchor: middle; }
.badge { font-size: 9px; }

.taskbar { display: flex; align-items: center; justify-content: space-between; height: 38px; padding: 0 15px; border-top: 1px solid #b8b2ab; background: linear-gradient(90deg, #ecdccf, #efe3d3 28%, #e5eadd 55%, #ece6dc 82%, #eadfd4); }
.weather { gap: 5px; width: 180px; justify-content: flex-start; text-align: left; line-height: 13px; color: #7a716b; }
.weather b { font-weight: 400; color: #444; }
.launch { flex: 1; display: flex; align-items: center; }
.launch > button { width: 22px; margin-right: 9px; }
.task-search { flex: 0 1 171px; display: flex; align-items: center; height: 24px; padding: 0 3px 0 9px; gap: 6px; border-radius: 12px; background: #faf6f1; box-shadow: 0 1px 1px rgba(0, 0, 0, .15); color: #6b6662; font-size: 11px; }
.task-search input { flex: 1; width: 60px; }
.apps-row { flex: 0 1 414px; display: grid; grid-template-columns: repeat(12, minmax(0, 1fr)); }
.apps-row button { height: 32px; position: relative; border-radius: 4px; }
.apps-row .notified { padding-left: 4px; }
.apps-row .current { background: #faf7f2; }
.open::after, .current::after { content: ""; position: absolute; bottom: 0; width: 5px; height: 2px; border-radius: 1px; background: #8b8780; }
.current::after { width: 12px; background: #1876cf; }
.clock { text-align: right; line-height: 13px; color: #444; white-space: nowrap; }
</style>
